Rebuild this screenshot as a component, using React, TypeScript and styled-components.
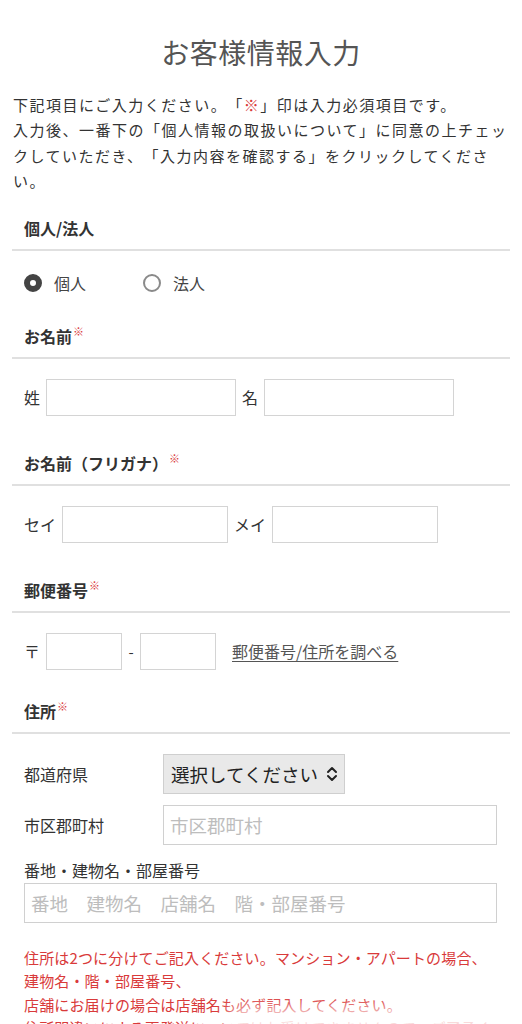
import React from "react";
import styled, { createGlobalStyle } from "styled-components";

const GlobalStyle = createGlobalStyle`
  html, body {
    margin: 0;
    padding: 0;
    background: #fff;
  }
  body {
    font-family: "Noto Sans CJK JP", "Noto Sans", sans-serif;
    color: #333;
    text-spacing-trim: space-all;
  }
  * {
    box-sizing: border-box;
  }
`;

const App = () => {
  return (
    <>
      <GlobalStyle />
      <Page>
        <Title>お客様情報入力</Title>
        <Intro>
          下記項目にご入力ください。「<Red>※</Red>」印は入力必須項目です。
          <br />
          入力後、一番下の「個人情報の取扱いについて」に同意の上チェックしていただき、「入力内容を確認する」をクリックしてください。
        </Intro>

        <Section $bottom={29}>
          <Heading>個人/法人</Heading>
          <Body>
            <RadioRow>
              <RadioItem>
                <Radio $checked />
                個人
              </RadioItem>
              <RadioItem>
                <Radio />
                法人
              </RadioItem>
            </RadioRow>
          </Body>
        </Section>

        <Section $bottom={35}>
          <Heading>
            お名前<Mark>※</Mark>
          </Heading>
          <Body>
            <FieldRow>
              <Label>姓</Label>
              <TextBox $w={190} />
              <Label>名</Label>
              <TextBox $w={190} />
            </FieldRow>
          </Body>
        </Section>

        <Section $bottom={35}>
          <Heading>
            お名前（フリガナ）<Mark>※</Mark>
          </Heading>
          <Body>
            <FieldRow>
              <Label>セイ</Label>
              <TextBox $w={166} />
              <Label>メイ</Label>
              <TextBox $w={166} />
            </FieldRow>
          </Body>
        </Section>

        <Section $bottom={29}>
          <Heading>
            郵便番号<Mark>※</Mark>
          </Heading>
          <Body>
            <FieldRow>
              <Label>〒</Label>
              <TextBox $w={76} />
              <Dash>-</Dash>
              <TextBox $w={76} />
              <Lookup href="#">郵便番号/住所を調べる</Lookup>
            </FieldRow>
          </Body>
        </Section>

        <Section $bottom={40}>
          <Heading>
            住所<Mark>※</Mark>
          </Heading>
          <Body>
            <AddressGrid>
              <Label>都道府県</Label>
              <Select>
                選択してください
                <svg width="12" height="16" viewBox="0 0 12 16">
                  <path
                    d="M2 6 L6 2 L10 6 M2 10 L6 14 L10 10"
                    fill="none"
                    stroke="#222"
                    strokeWidth="2"
                    strokeLinecap="round"
                    strokeLinejoin="round"
                  />
                </svg>
              </Select>
              <Label>市区郡町村</Label>
              <BigInput $w={334} placeholder="市区郡町村" />
            </AddressGrid>
            <StackLabel>番地・建物名・部屋番号</StackLabel>
            <BigInput $w={473} placeholder="番地　建物名　店舗名　階・部屋番号" />
            <Notes>
              住所は2つに分けてご記入ください。マンション・アパートの場合、
              <br />
              建物名・階・部屋番号、
              <br />
              店舗にお届けの場合は店舗名も必ず記入してください。
              <br />
              住所間違いによる再発送についてはお受けできませんので、ご了承ください。
            </Notes>
          </Body>
        </Section>
      </Page>
      <BottomFade />
    </>
  );
};

export default App;

const Page = styled.div`
  padding: 32px 12px 40px;
`;

const Title = styled.h1`
  margin: 0 0 20px;
  text-align: center;
  font-size: 28px;
  line-height: 40px;
  font-weight: 400;
  color: #555;
  letter-spacing: 0.5px;
`;

const Intro = styled.p`
  margin: 0 -4px 22px 0;
  padding-left: 1px;
  font-size: 15px;
  line-height: 25.4px;
  letter-spacing: 1.5px;
  color: #333;
`;

const Red = styled.span`
  color: #d93a3a;
`;

const Section = styled.section<{ $bottom: number }>`
  margin-bottom: ${(p) => p.$bottom}px;
`;

const Heading = styled.h2`
  margin: 0;
  padding: 0 12px 9px;
  font-size: 16px;
  line-height: 24px;
  font-weight: 700;
  color: #333;
  border-bottom: 2px solid #e0e0e0;
`;

const Mark = styled.span`
  position: relative;
  top: -7px;
  margin-left: 1px;
  font-size: 11px;
  line-height: 0;
  font-weight: 400;
  color: #d93a3a;
`;

const Body = styled.div`
  padding: 20px 12px 0;
`;

const RadioRow = styled.div`
  display: flex;
  gap: 57px;
  height: 24px;
  align-items: center;
`;

const RadioItem = styled.label`
  display: flex;
  align-items: center;
  gap: 12px;
  font-size: 16px;
  color: #444;
`;

const Radio = styled.span<{ $checked?: boolean }>`
  width: 18px;
  height: 18px;
  border-radius: 50%;
  border: ${(p) => (p.$checked ? "6px solid #444" : "2px solid #8a8a8a")};
  background: #fff;
`;

const FieldRow = styled.div`
  display: flex;
  align-items: center;
  gap: 6px;
`;

const Label = styled.span`
  font-size: 16px;
  color: #333;
  white-space: nowrap;
`;

const TextBox = styled.input<{ $w: number }>`
  width: ${(p) => p.$w}px;
  height: 37px;
  border: 1px solid #d4d4d4;
  background: #fff;
  outline: none;
  font-size: 16px;
  padding: 0 6px;
`;

const Dash = styled.span`
  width: 6px;
  text-align: center;
  font-size: 15px;
  color: #333;
`;

const Lookup = styled.a`
  margin-left: 10px;
  font-size: 16px;
  color: #555;
  text-decoration: underline;
  text-underline-offset: 3px;
`;

const AddressGrid = styled.div`
  display: grid;
  grid-template-columns: 139px 334px;
  row-gap: 11px;
  align-items: center;
`;

const Select = styled.div`
  width: 182px;
  height: 40px;
  display: flex;
  align-items: center;
  justify-content: space-between;
  padding: 0 6px 0 7px;
  background: #e9e9e9;
  border: 1px solid #cfcfcf;
  font-size: 18.5px;
  color: #222;
  svg {
    flex: none;
  }
`;

const BigInput = styled.input<{ $w: number }>`
  display: block;
  width: ${(p) => p.$w}px;
  height: 40px;
  border: 1px solid #d0d0d0;
  background: #fff;
  outline: none;
  padding: 0 6px;
  font-size: 18.5px;
  font-family: inherit;
  color: #333;
  &::placeholder {
    color: #bdbdbd;
  }
`;

const StackLabel = styled.div`
  margin: 14px 0 2px;
  font-size: 16px;
  line-height: 22px;
  color: #333;
`;

const Notes = styled.p`
  margin: 23px 0 0;
  font-size: 15px;
  line-height: 23.5px;
  letter-spacing: 0.15px;
  color: #d93a3a;
`;

const BottomFade = styled.div`
  position: fixed;
  left: 230px;
  right: -30px;
  bottom: -14px;
  height: 30px;
  background: rgba(255, 255, 255, 0.85);
  filter: blur(8px);
  pointer-events: none;
`;
